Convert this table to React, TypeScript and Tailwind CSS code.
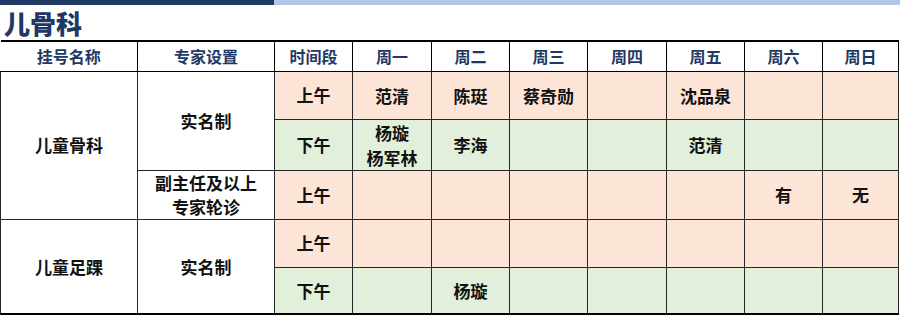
import React from "react";

const font = { fontFamily: '"Noto Sans CJK SC", "Noto Sans", sans-serif' };

const P = "bg-[#FCE4D6]";
const G = "bg-[#E2EFDA]";

type Row = { time: string; bg: string; h: string; cells: string[][] };

export default function App() {
  const headers = ["时间段", "周一", "周二", "周三", "周四", "周五", "周六", "周日"];
  const rows: Row[] = [
    { time: "上午", bg: P, h: "h-[48px]", cells: [["范清"], ["陈珽"], ["蔡奇勋"], [], ["沈品泉"], [], []] },
    { time: "下午", bg: G, h: "h-[47px]", cells: [["杨璇", "杨军林"], ["李海"], [], [], ["范清"], [], []] },
    { time: "上午", bg: P, h: "h-[48px]", cells: [[], [], [], [], [], ["有"], ["无"]] },
    { time: "上午", bg: P, h: "h-[48px]", cells: [[], [], [], [], [], [], []] },
    { time: "下午", bg: G, h: "h-[47px]", cells: [[], ["杨璇"], [], [], [], [], []] },
  ];
  const td = "border border-[#262626] text-center align-middle p-0";
  const left = (i: number) => {
    if (i === 0)
      return (
        <>
          <td rowSpan={3} className={td + " bg-white"}>儿童骨科</td>
          <td rowSpan={2} className={td + " bg-white"}>实名制</td>
        </>
      );
    if (i === 2)
      return (
        <td className={td + " bg-white leading-[24px]"}>
          副主任及以上
          <br />
          专家轮诊
        </td>
      );
    if (i === 3)
      return (
        <>
          <td rowSpan={2} className={td + " bg-white"}>儿童足踝</td>
          <td rowSpan={2} className={td + " bg-white"}>实名制</td>
        </>
      );
    return null;
  };
  return (
    <div className="w-[900px] h-[316px] bg-white overflow-hidden" style={font}>
      <div className="flex h-[5px]">
        <div className="w-[274px] bg-[#203864]" />
        <div className="flex-1 bg-[#B4C6E7]" />
      </div>
      <div className="h-[35px] flex items-center pl-[4px] text-[26px] font-black text-[#1F3864] leading-none">
        儿骨科
      </div>
      <table className="table-fixed border-collapse w-[898px] border-t-2 border-b-2 border-black">
        <colgroup>
          <col className="w-[137px]" />
          <col className="w-[137px]" />
          <col className="w-[78px]" />
          <col className="w-[79px]" />
          <col className="w-[78px]" />
          <col className="w-[78px]" />
          <col className="w-[79px]" />
          <col className="w-[78px]" />
          <col className="w-[78px]" />
          <col className="w-[76px]" />
        </colgroup>
        <thead>
          <tr className="h-[30px] text-[16px] font-bold text-[#1F3864]">
            <th className="border-t-2 border-b border-r border-black p-0">挂号名称</th>
            <th className="border-t-2 border-b border-r border-black p-0">专家设置</th>
            {headers.map((h) => (
              <th key={h} className="border-t-2 border-b border-r border-black p-0">
                {h}
              </th>
            ))}
          </tr>
        </thead>
        <tbody className="text-[17px] font-bold text-[#111]">
          {rows.map((r, i) => (
            <tr key={i} className={r.h}>
              {left(i)}
              <td className={td + " " + r.bg}>{r.time}</td>
              {r.cells.map((c, j) => (
                <td key={j} className={td + " " + r.bg + " leading-[25px]"}>
                  {c.map((t, k) => (
                    <div key={k}>{t}</div>
                  ))}
                </td>
              ))}
            </tr>
          ))}
        </tbody>
      </table>
    </div>
  );
}
